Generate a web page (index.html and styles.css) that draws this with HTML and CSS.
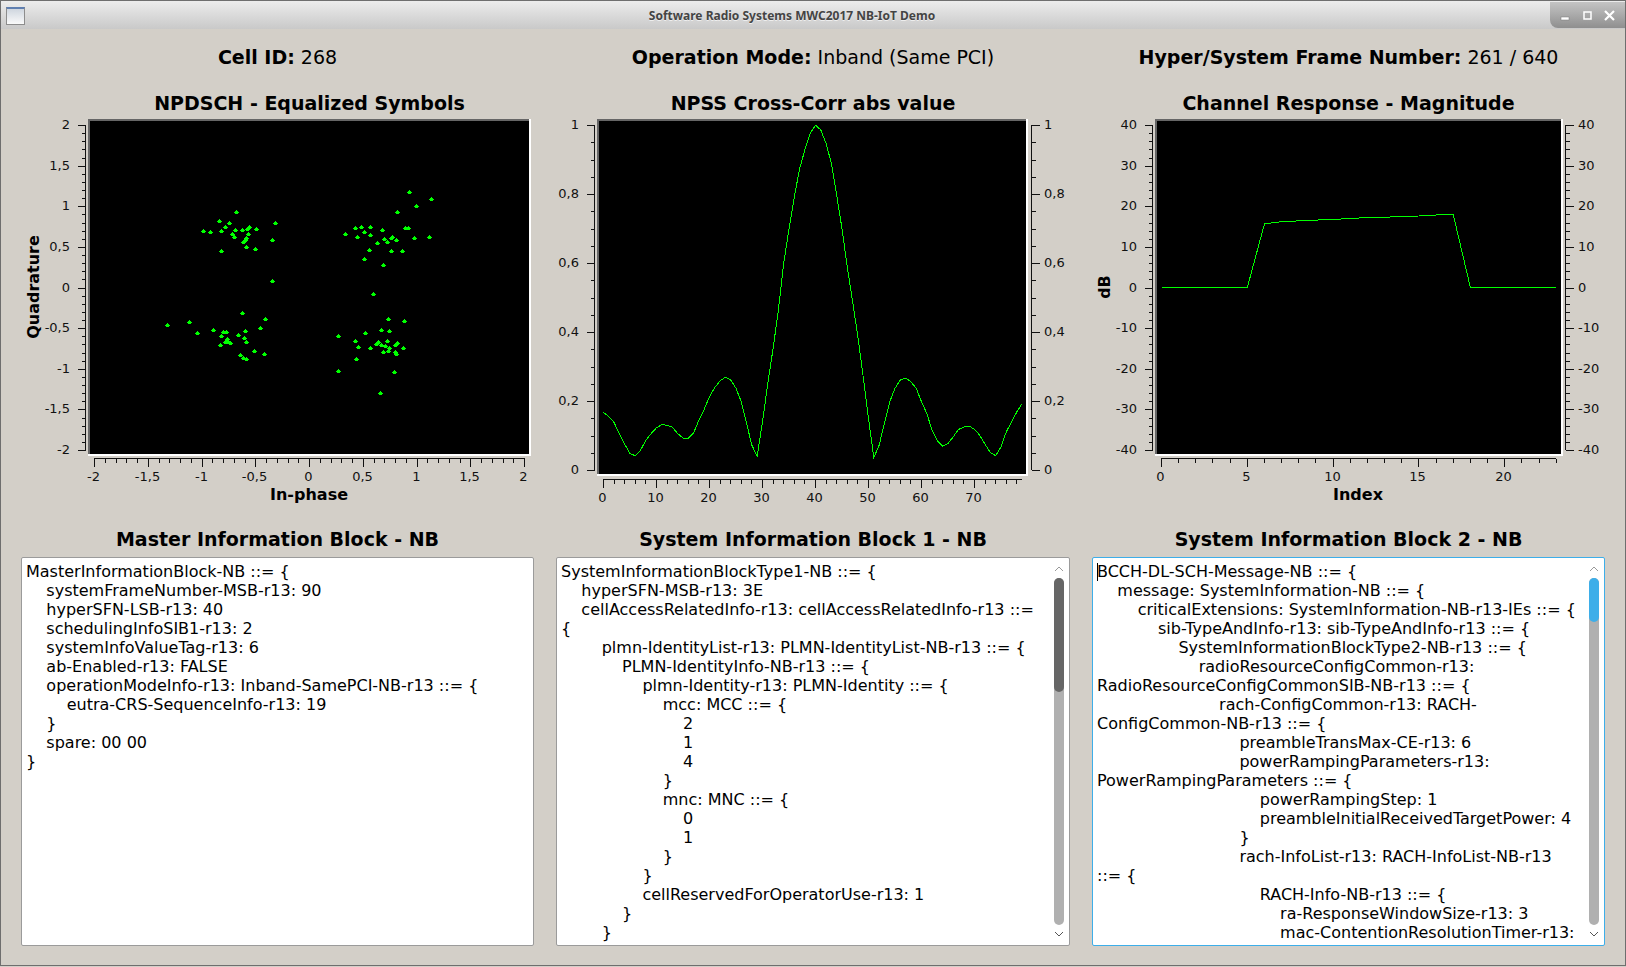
FILE: index.html
```html
<!DOCTYPE html>
<html lang="en">
<head>
    <meta charset="UTF-8">
    <title>Software Radio Systems MWC2017 NB-IoT Demo</title>
    <link rel="stylesheet" href="styles.css">
</head>
<body>
    <div class="window">
        <!-- Title bar -->
        <div class="titlebar">
            <div class="app-icon"></div>
            <div class="window-title">Software Radio Systems MWC2017 NB-IoT Demo</div>
            <div class="window-buttons">
                <svg width="75" height="26" viewBox="0 0 75 26">
                    <rect x="11" y="15" width="8" height="3" fill="#fff" stroke="#777" stroke-width="0.5"/>
                    <rect x="34" y="10" width="7" height="7" fill="none" stroke="#fff" stroke-width="1.5"/>
                    <path d="M55 9l9 9M64 9l-9 9" stroke="#fff" stroke-width="2.2"/>
                </svg>
            </div>
        </div>

        <div class="content">
            <!-- Column 1 -->
            <div class="column">
                <div class="info"><b>Cell ID:</b> 268</div>
                <div class="plot-title plot-title-1">NPDSCH - Equalized Symbols</div>
                <svg class="plot" id="plotScatter" viewBox="21 117 513 408"></svg>
                <div class="box-title">Master Information Block - NB</div>
                <div class="textbox">
<pre class="asn">MasterInformationBlock-NB ::= {
    systemFrameNumber-MSB-r13: 90
    hyperSFN-LSB-r13: 40
    schedulingInfoSIB1-r13: 2
    systemInfoValueTag-r13: 6
    ab-Enabled-r13: FALSE
    operationModeInfo-r13: Inband-SamePCI-NB-r13 ::= {
        eutra-CRS-SequenceInfo-r13: 19
    }
    spare: 00 00
}</pre>
                </div>
            </div>

            <!-- Column 2 -->
            <div class="column">
                <div class="info"><b>Operation Mode:</b> Inband (Same PCI)</div>
                <div class="plot-title">NPSS Cross-Corr abs value</div>
                <svg class="plot" id="plotNpss" viewBox="556 117 514 408"></svg>
                <div class="box-title">System Information Block 1 - NB</div>
                <div class="textbox">
<pre class="asn">SystemInformationBlockType1-NB ::= {
    hyperSFN-MSB-r13: 3E
    cellAccessRelatedInfo-r13: cellAccessRelatedInfo-r13 ::= 
{
        plmn-IdentityList-r13: PLMN-IdentityList-NB-r13 ::= {
            PLMN-IdentityInfo-NB-r13 ::= {
                plmn-Identity-r13: PLMN-Identity ::= {
                    mcc: MCC ::= {
                        2
                        1
                        4
                    }
                    mnc: MNC ::= {
                        0
                        1
                    }
                }
                cellReservedForOperatorUse-r13: 1
            }
        }</pre>
                    <div class="scrollbar">
                        <svg class="arrow" width="10" height="20" viewBox="0 0 10 20"><path d="M1 13l4-4 4 4" fill="none" stroke="#999" stroke-width="1"/></svg>
                        <div class="track"><div class="thumb thumb-dark"></div></div>
                        <svg class="arrow" width="10" height="20" viewBox="0 0 10 20"><path d="M1 7l4 4 4-4" fill="none" stroke="#555" stroke-width="1"/></svg>
                    </div>
                </div>
            </div>

            <!-- Column 3 -->
            <div class="column">
                <div class="info"><b>Hyper/System Frame Number:</b> 261 / 640</div>
                <div class="plot-title">Channel Response - Magnitude</div>
                <svg class="plot" id="plotChannel" viewBox="1092 117 513 408"></svg>
                <div class="box-title">System Information Block 2 - NB</div>
                <div class="textbox focused">
<pre class="asn"><span class="caret"></span>BCCH-DL-SCH-Message-NB ::= {
    message: SystemInformation-NB ::= {
        criticalExtensions: SystemInformation-NB-r13-IEs ::= {
            sib-TypeAndInfo-r13: sib-TypeAndInfo-r13 ::= {
                SystemInformationBlockType2-NB-r13 ::= {
                    radioResourceConfigCommon-r13: 
RadioResourceConfigCommonSIB-NB-r13 ::= {
                        rach-ConfigCommon-r13: RACH-
ConfigCommon-NB-r13 ::= {
                            preambleTransMax-CE-r13: 6
                            powerRampingParameters-r13: 
PowerRampingParameters ::= {
                                powerRampingStep: 1
                                preambleInitialReceivedTargetPower: 4
                            }
                            rach-InfoList-r13: RACH-InfoList-NB-r13 
::= {
                                RACH-Info-NB-r13 ::= {
                                    ra-ResponseWindowSize-r13: 3
                                    mac-ContentionResolutionTimer-r13: </pre>
                    <div class="scrollbar">
                        <svg class="arrow" width="10" height="20" viewBox="0 0 10 20"><path d="M1 13l4-4 4 4" fill="none" stroke="#999" stroke-width="1"/></svg>
                        <div class="track"><div class="thumb thumb-blue"></div></div>
                        <svg class="arrow" width="10" height="20" viewBox="0 0 10 20"><path d="M1 7l4 4 4-4" fill="none" stroke="#555" stroke-width="1"/></svg>
                    </div>
                </div>
            </div>
        </div>
    </div>

    <script src="plots.js"></script>
</body>
</html>
```

FILE: styles.css
```css
* {
    margin: 0;
    padding: 0;
    box-sizing: border-box;
}

body {
    font-family: "DejaVu Sans", sans-serif;
    color: #000;
    background: #d3cfc8;
    width: 1626px;
    height: 967px;
    overflow: hidden;
}

.window {
    width: 1626px;
    height: 966px;
    background: #d3cfc8;
    border: 1px solid #6e6e6e;
    display: flex;
    flex-direction: column;
}

/* Title bar */
.titlebar {
    height: 28px;
    flex-shrink: 0;
    background: linear-gradient(#ececec, #c9c9c9);
    display: flex;
    align-items: center;
    position: relative;
}

.app-icon {
    width: 19px;
    height: 18px;
    margin: 1px 0 0 5px;
    border: 1px solid #8d8d8d;
    border-top: 2px solid #5f7fb0;
    background: linear-gradient(#cfd6df, #fafafa);
}

.window-title {
    position: absolute;
    left: 0;
    right: 42px;
    top: 7px;
    text-align: center;
    font-family: "Noto Sans", sans-serif;
    font-weight: bold;
    font-size: 12px;
    line-height: 16px;
    color: #444;
    text-shadow: 0 1px 0 #eee;
}

.window-buttons {
    position: absolute;
    right: 0;
    top: 1px;
    width: 75px;
    height: 26px;
    background: linear-gradient(#c4c4c4, #8f8f8f);
    border-bottom-left-radius: 8px;
}

.window-buttons svg {
    display: block;
}

/* Main grid */
.content {
    display: grid;
    grid-template-columns: 513px 514px 513px;
    column-gap: 22px;
    padding: 14px 0 0 20px;
}

.column {
    display: flex;
    flex-direction: column;
    min-width: 0;
}

.info {
    height: 28px;
    line-height: 28px;
    text-align: center;
    font-size: 19px;
    white-space: nowrap;
}

.plot-title,
.box-title {
    height: 28px;
    line-height: 28px;
    text-align: center;
    font-size: 19px;
    font-weight: bold;
    white-space: nowrap;
}

.plot-title {
    margin-top: 18px;
}

.plot-title-1 {
    padding-left: 64px;
}

.plot {
    display: block;
    width: 100%;
    height: 408px;
}

.plot text {
    font-family: "DejaVu Sans", sans-serif;
    font-size: 13px;
    fill: #111;
}

.plot .axis-title {
    font-size: 16px;
    font-weight: bold;
    fill: #000;
}

/* Text boxes */
.textbox {
    height: 389px;
    margin-top: 4px;
    background: #fff;
    border: 1px solid #9b9b9b;
    border-radius: 2px;
    display: flex;
    overflow: hidden;
}

.textbox.focused {
    border-color: #3daee9;
}

.asn {
    flex: 1;
    min-width: 0;
    padding: 4px 4px 0 4px;
    font-family: "DejaVu Sans", sans-serif;
    font-size: 16px;
    line-height: 19px;
    white-space: pre;
    overflow: hidden;
}

.caret {
    display: inline-block;
    width: 1px;
    height: 18px;
    margin-right: -1px;
    background: #000;
    vertical-align: -4px;
}

.scrollbar {
    width: 10px;
    margin-right: 5px;
    flex-shrink: 0;
    display: flex;
    flex-direction: column;
}

.arrow {
    display: block;
    flex-shrink: 0;
}

.track {
    flex: 1;
    background: #b0b0b0;
    border-radius: 5px;
}

.thumb {
    border-radius: 5px;
}

.thumb-dark {
    height: 114px;
    background: #666;
}

.thumb-blue {
    height: 44px;
    background: #3daee9;
}
```

FILE: plots.js
```js
const SVG_NS = 'http://www.w3.org/2000/svg';

function el(parent, name, attrs, text) {
    const node = document.createElementNS(SVG_NS, name);
    for (const key in attrs) {
        node.setAttribute(key, attrs[key]);
    }
    if (text !== undefined) {
        node.textContent = text;
    }
    parent.appendChild(node);
    return node;
}

function hairline(svg, x1, y1, x2, y2) {
    el(svg, 'line', {
        x1: x1, y1: y1, x2: x2, y2: y2,
        stroke: '#111', 'stroke-width': 1, 'shape-rendering': 'crispEdges'
    });
}

// Sunken black canvas: dark top and left edge, white bottom and right edge
function drawCanvas(svg, l, t, r, b) {
    el(svg, 'rect', { x: l, y: t, width: r - l, height: b - t, fill: '#666' });
    el(svg, 'path', { d: `M${r} ${t}V${b}H${l}v-2H${r - 2}V${t}z`, fill: '#fff' });
    el(svg, 'rect', { x: l + 2, y: t + 2, width: r - l - 4, height: b - t - 4, fill: '#000' });
}

// Vertical scale. dir = -1 puts ticks and labels left of the backbone, 1 right of it
function drawYAxis(svg, x, dir, top, bottom, labels, minors) {
    const px = Math.round(x) + 0.5;
    const count = (labels.length - 1) * minors;
    hairline(svg, px, top, px, bottom);
    for (let i = 0; i <= count; i++) {
        const y = Math.round(top + (bottom - top) * i / count) + 0.5;
        const major = i % minors === 0;
        hairline(svg, px, y, px + dir * (major ? 8 : 4), y);
        if (major) {
            el(svg, 'text', {
                x: dir < 0 ? x - 15 : x + 13,
                y: y + 3.5,
                'text-anchor': dir < 0 ? 'end' : 'start'
            }, labels[i / minors]);
        }
    }
}

// Horizontal scale: major ticks every majorStep px, five minor steps in each
function drawXAxis(svg, y, x0, xEnd, majorStep, labels) {
    const py = Math.round(y) + 0.5;
    hairline(svg, x0, py, xEnd, py);
    const minorStep = majorStep / 5;
    for (let i = 0; x0 + i * minorStep <= xEnd + 0.5; i++) {
        const x = Math.round(x0 + i * minorStep) + 0.5;
        const major = i % 5 === 0;
        hairline(svg, x, py, x, py + (major ? 8 : 4));
        if (major && labels[i / 5] !== undefined) {
            el(svg, 'text', { x: x - 1, y: y + 23, 'text-anchor': 'middle' }, labels[i / 5]);
        }
    }
}

function drawCurve(svg, points) {
    el(svg, 'polyline', {
        points: points.map(p => p[0].toFixed(1) + ',' + p[1].toFixed(1)).join(' '),
        fill: 'none', stroke: '#0f0', 'stroke-width': 1, 'shape-rendering': 'crispEdges'
    });
}

function axisTitle(svg, text, x, y, rotated) {
    const attrs = { class: 'axis-title', x: x, y: y, 'text-anchor': 'middle' };
    if (rotated) {
        attrs.transform = `rotate(-90 ${x} ${y})`;
    }
    el(svg, 'text', attrs, text);
}

// Constellation symbols, in page pixels
const symbols = [
    [236,212],[219,221],[229,223],[275,223],[225,227],[203,231],[210,232],[221,231],
    [235,230],[242,230],[249,227],[247,229],[256,229],[232,234],[248,234],[234,237],
    [272,240],[246,238],[245,240],[243,242],[246,247],[255,249],[221,251],[272,281],
    [409,192],[431,199],[416,206],[397,212],[355,228],[361,227],[370,227],[382,230],
    [345,234],[364,232],[357,237],[370,235],[405,228],[408,228],[392,237],[391,238],
    [384,239],[396,240],[387,242],[377,243],[414,238],[429,237],[369,250],[391,251],
    [402,251],[364,259],[383,265],[373,294],
    [242,313],[265,319],[167,325],[189,322],[197,333],[213,330],[223,332],[226,332],
    [245,331],[260,328],[238,335],[221,336],[244,338],[246,342],[227,339],[225,342],
    [228,342],[230,343],[220,345],[240,355],[243,358],[246,359],[254,351],[264,354],
    [388,319],[404,321],[381,330],[389,331],[365,333],[338,336],[355,341],[358,347],
    [370,348],[378,342],[376,344],[381,345],[385,346],[387,341],[389,348],[388,351],
    [383,352],[397,343],[395,345],[403,348],[395,352],[396,354],[356,359],[338,371],
    [394,372],[380,393]
];

// NPSS correlation, one value per index
const npss = [
    0.168,0.156,0.139,0.105,0.076,0.049,0.043,0.059,0.088,0.107,
    0.124,0.133,0.131,0.125,0.107,0.094,0.093,0.109,0.146,0.177,
    0.214,0.240,0.260,0.270,0.262,0.238,0.199,0.136,0.073,0.041,
    0.141,0.252,0.354,0.465,0.600,0.700,0.792,0.874,0.929,0.976,
    1.000,0.986,0.947,0.889,0.797,0.700,0.589,0.489,0.387,0.271,
    0.151,0.037,0.073,0.136,0.199,0.238,0.262,0.268,0.257,0.238,
    0.199,0.165,0.117,0.086,0.071,0.078,0.098,0.119,0.126,0.129,
    0.119,0.102,0.076,0.052,0.043,0.069,0.112,0.141,0.170,0.194
];

// Channel magnitude in dB, one value per index
const channel = [
    0,0,0,0,0,0,15.7,16.2,16.4,16.6,16.8,16.95,17.3,17.3,17.5,17.6,17.85,18,
    0,0,0,0,0,0
];

const iqLabels = ['2', '1,5', '1', '0,5', '0', '-0,5', '-1', '-1,5', '-2'];
const dbLabels = ['40', '30', '20', '10', '0', '-10', '-20', '-30', '-40'];

// NPDSCH - Equalized Symbols
const scatter = document.getElementById('plotScatter');
drawCanvas(scatter, 88, 119, 531, 456);
drawYAxis(scatter, 85, -1, 125, 450, iqLabels, 5);
drawXAxis(scatter, 458, 94, 524.5, 53.75, iqLabels.slice().reverse());
el(scatter, 'path', {
    d: symbols.map(([x, y]) => `M${x} ${y - 2}h1v1h1v1h1v1h-1v1h-3v-1h-1v-1h1v-1h1z`).join(''),
    fill: '#0f0', 'shape-rendering': 'crispEdges'
});
axisTitle(scatter, 'Quadrature', 39, 287, true);
axisTitle(scatter, 'In-phase', 309, 500);

// NPSS Cross-Corr abs value
const corr = document.getElementById('plotNpss');
drawCanvas(corr, 597, 119, 1028, 476);
const corrLabels = ['1', '0,8', '0,6', '0,4', '0,2', '0'];
drawYAxis(corr, 594, -1, 125, 470, corrLabels, 4);
drawYAxis(corr, 1031, 1, 125, 470, corrLabels, 4);
drawXAxis(corr, 479, 603, 1022, 53, ['0', '10', '20', '30', '40', '50', '60', '70']);
drawCurve(corr, npss.map((v, i) => [603.5 + i * 5.3, 470.5 - v * 345.3]));

// Channel Response - Magnitude
const response = document.getElementById('plotChannel');
drawCanvas(response, 1155, 119, 1563, 456);
drawYAxis(response, 1152, -1, 125, 450, dbLabels, 5);
drawYAxis(response, 1565, 1, 125, 450, dbLabels, 5);
drawXAxis(response, 458, 1161, 1556, 85.8, ['0', '5', '10', '15', '20']);
drawCurve(response, channel.map((v, i) => [1161.5 + i * 17.16, 287.5 - v * 4.06]));
axisTitle(response, 'dB', 1110, 287, true);
axisTitle(response, 'Index', 1358, 500);
```
